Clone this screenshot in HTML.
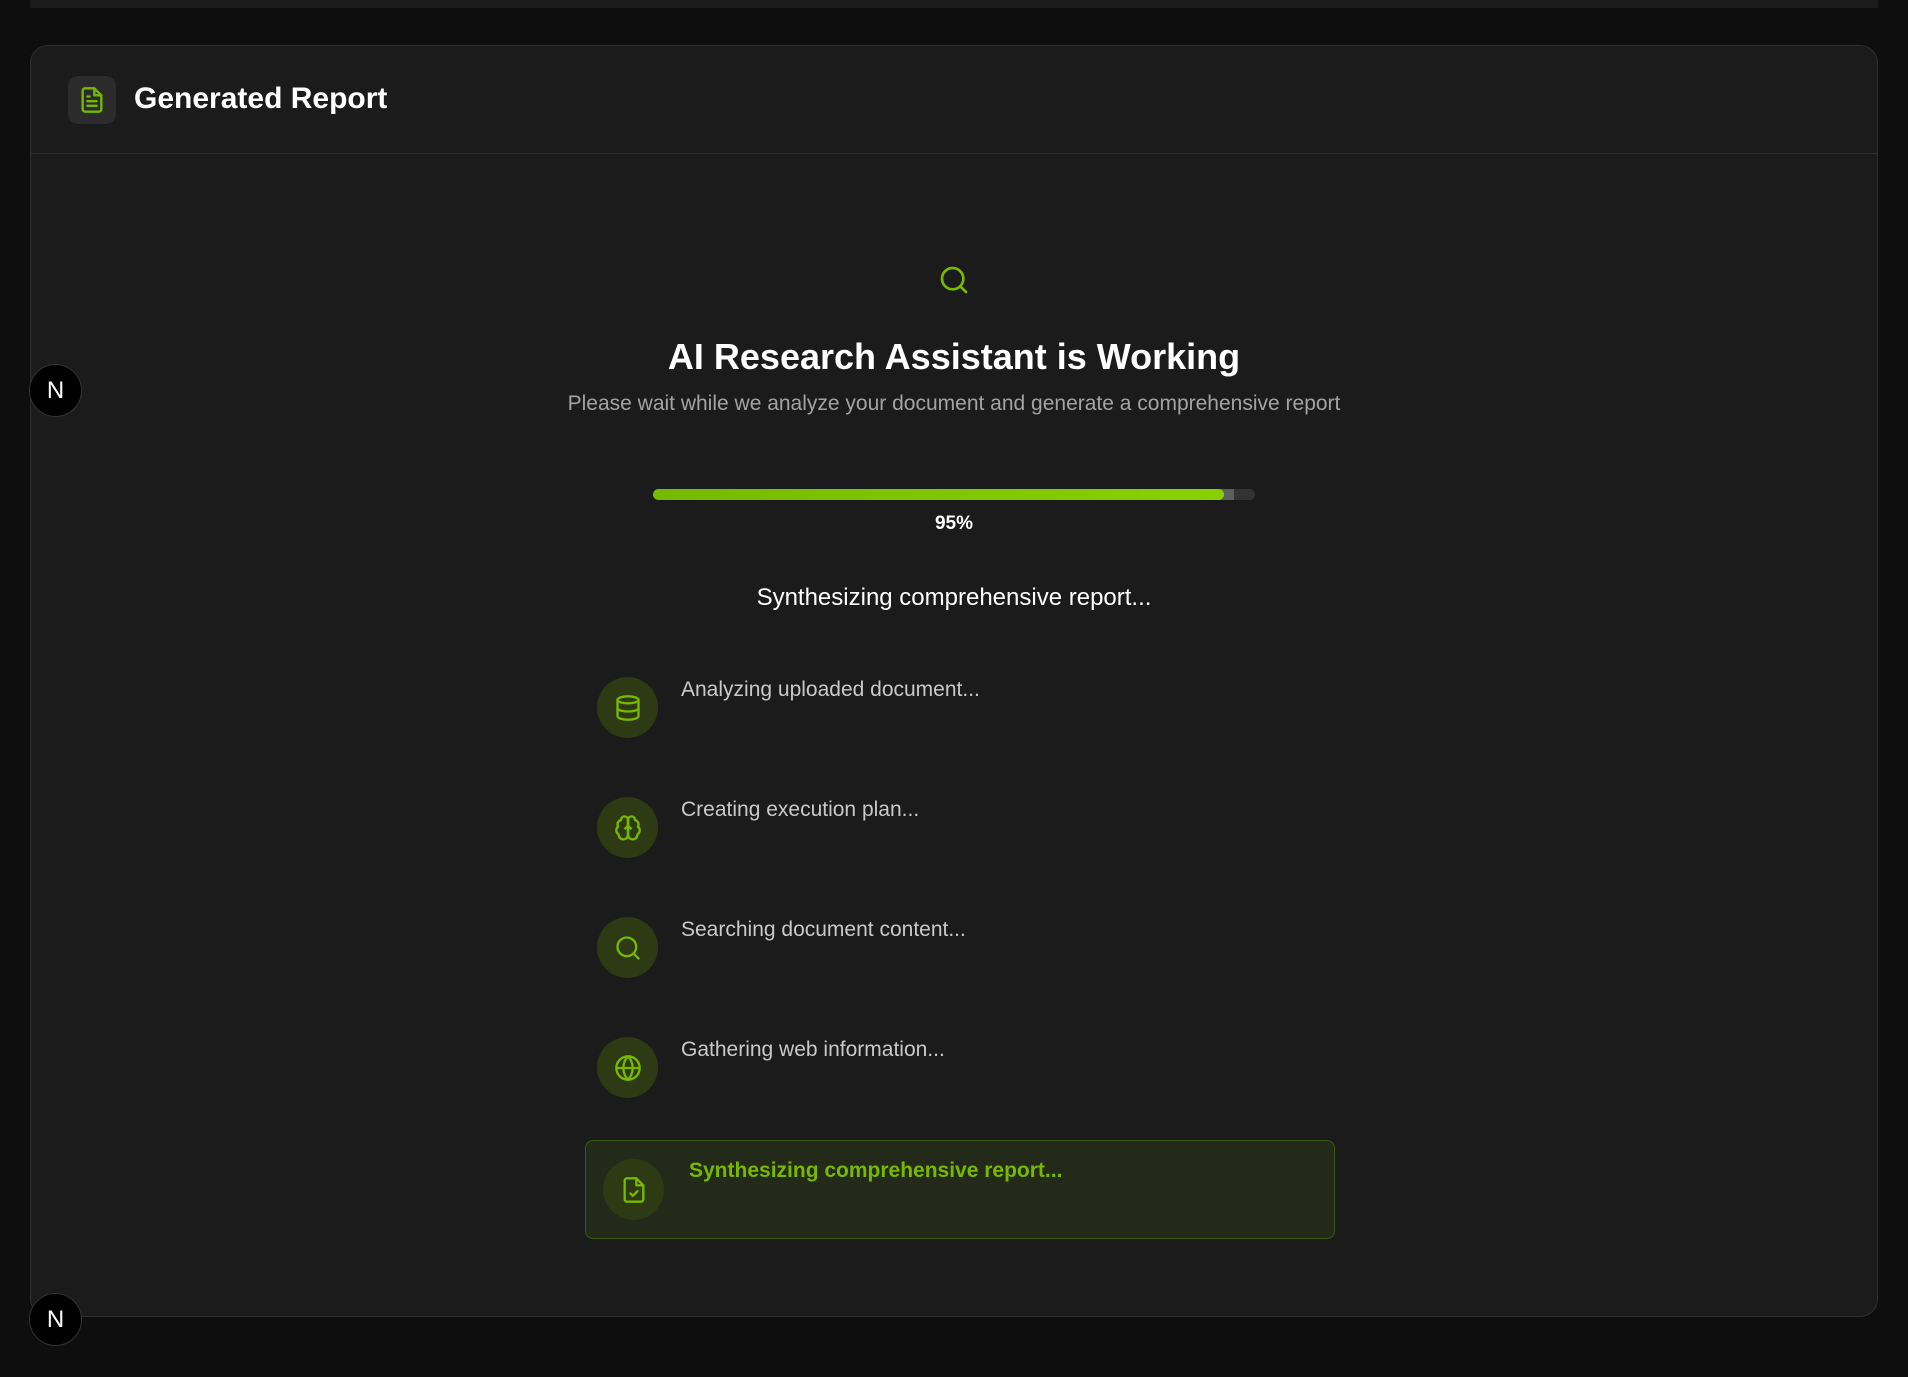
<!DOCTYPE html>
<html><head><meta charset="utf-8"><style>
*{box-sizing:border-box;margin:0;padding:0}
body{width:1908px;height:1377px;background:#0e0e0e;font-family:"Liberation Sans",Arial,sans-serif;position:relative;overflow:hidden;color:#fff}
.topbar{position:absolute;left:30px;top:0;width:1848px;height:8px;background:#1b1b1b}
.card{position:absolute;left:30px;top:45px;width:1848px;height:1272px;background:#1b1b1b;border:1px solid #2e2e2e;border-radius:18px}
.hdr{height:108px;border-bottom:1px solid #2e2e2e;position:relative}
.hicon{position:absolute;left:37px;top:30px;width:48px;height:48px;border-radius:10px;background:#2b2b2b;display:flex;align-items:center;justify-content:center}
.htitle{position:absolute;left:103px;top:36px;font-size:30px;font-weight:bold}
.abs{position:absolute;left:0;width:100%;text-align:center}
.circ{position:absolute;width:61px;height:61px;border-radius:50%;background:#2d3a14;display:flex;align-items:center;justify-content:center}
.st{position:absolute;font-size:21px;color:#c9c9c9}
.nb{position:absolute;left:29px;width:53px;height:53px;border-radius:50%;background:#000;border:1px solid #333;color:#fff;font-size:24px;display:flex;align-items:center;justify-content:center}
</style></head><body>
<div class="topbar"></div>
<div class="card">
 <div class="hdr">
  <div class="hicon"><svg width="28" height="28" viewBox="0 0 24 24" fill="none" stroke="#76b900" stroke-width="2" stroke-linecap="round" stroke-linejoin="round"><path d="M14 2H6a2 2 0 0 0-2 2v16a2 2 0 0 0 2 2h12a2 2 0 0 0 2-2V8z"/><path d="M14 2v6h6"/><path d="M16 13H8M16 17H8M10 9H8"/></svg></div>
  <div class="htitle">Generated Report</div>
 </div>
</div>
<svg style="position:absolute;left:938px;top:264px" width="32" height="32" viewBox="0 0 24 24" fill="none" stroke="#76b900" stroke-width="2" stroke-linecap="round"><circle cx="11" cy="11" r="8"/><path d="m21 21-4.3-4.3"/></svg>
<div class="abs" style="top:336px;font-size:36px;font-weight:bold">AI Research Assistant is Working</div>
<div class="abs" style="top:392px;font-size:21px;color:#a3a3a3">Please wait while we analyze your document and generate a comprehensive report</div>
<div style="position:absolute;left:653px;top:489px;width:602px;height:11px;border-radius:6px;background:#333;overflow:hidden">
 <div style="position:absolute;left:0;top:0;width:581px;height:11px;background:#5e5e5e"></div>
 <div style="position:absolute;left:0;top:0;width:571px;height:11px;border-radius:6px;background:linear-gradient(90deg,#76b900,#8ad000)"></div>
</div>
<div class="abs" style="top:513px;font-size:19px;font-weight:bold">95%</div>
<div class="abs" style="top:584px;font-size:24px">Synthesizing comprehensive report...</div>

<div class="circ" style="left:597px;top:677px"><svg width="28" height="28" viewBox="0 0 24 24" fill="none" stroke="#76b900" stroke-width="2"><ellipse cx="12" cy="5" rx="9" ry="3"/><path d="M3 5v14a9 3 0 0 0 18 0V5"/><path d="M3 12a9 3 0 0 0 18 0"/></svg></div>
<div class="st" style="left:681px;top:678px">Analyzing uploaded document...</div>
<div class="circ" style="left:597px;top:797px"><svg width="28" height="28" viewBox="0 0 24 24" fill="none" stroke="#76b900" stroke-width="2" stroke-linejoin="round"><path d="M12 5a3 3 0 1 0-6 .1 4 4 0 0 0-2.5 5.8 4 4 0 0 0 .5 6.6A4 4 0 1 0 12 18Z"/><path d="M12 5a3 3 0 1 1 6 .1 4 4 0 0 1 2.5 5.8 4 4 0 0 1-.5 6.6A4 4 0 1 1 12 18Z"/><path d="M12 5v13M9 13l3-3 3 3"/></svg></div>
<div class="st" style="left:681px;top:798px">Creating execution plan...</div>
<div class="circ" style="left:597px;top:917px"><svg width="28" height="28" viewBox="0 0 24 24" fill="none" stroke="#76b900" stroke-width="2" stroke-linecap="round"><circle cx="11" cy="11" r="8"/><path d="m21 21-4.3-4.3"/></svg></div>
<div class="st" style="left:681px;top:918px">Searching document content...</div>
<div class="circ" style="left:597px;top:1037px"><svg width="28" height="28" viewBox="0 0 24 24" fill="none" stroke="#76b900" stroke-width="2"><circle cx="12" cy="12" r="10"/><path d="M12 2a14.5 14.5 0 0 0 0 20 14.5 14.5 0 0 0 0-20M2 12h20"/></svg></div>
<div class="st" style="left:681px;top:1038px">Gathering web information...</div>

<div style="position:absolute;left:585px;top:1140px;width:750px;height:99px;border:1px solid #3e5a0f;border-radius:8px;background:#232a1a"></div>
<div class="circ" style="left:603px;top:1159px"><svg width="28" height="28" viewBox="0 0 24 24" fill="none" stroke="#76b900" stroke-width="2" stroke-linecap="round" stroke-linejoin="round"><path d="M14 2H6a2 2 0 0 0-2 2v16a2 2 0 0 0 2 2h12a2 2 0 0 0 2-2V8z"/><path d="M14 2v6h6"/><path d="m9 15 2 2 4-4"/></svg></div>
<div class="st" style="left:689px;top:1159px;color:#76b900;font-weight:bold">Synthesizing comprehensive report...</div>

<div class="nb" style="top:364px">N</div>
<div class="nb" style="top:1293px">N</div>
</body></html>
